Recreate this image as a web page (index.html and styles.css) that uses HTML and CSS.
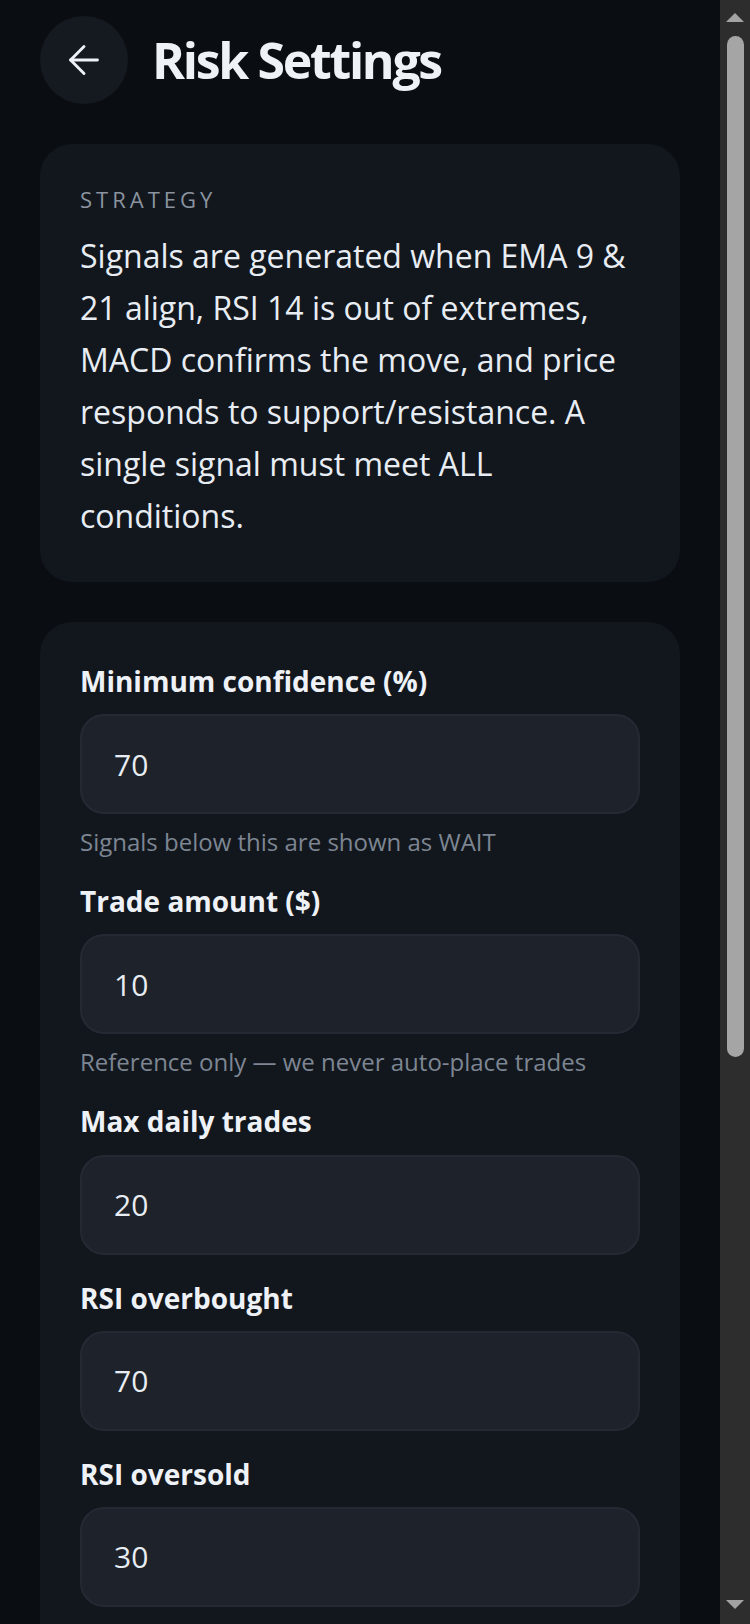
FILE: index.html
```html
<!DOCTYPE html>
<html lang="en">

<head>
    <meta charset="UTF-8">
    <meta name="viewport" content="width=device-width, initial-scale=1.0">
    <title>Risk Settings</title>
    <link rel="stylesheet" href="styles.css">
</head>

<body>
    <div class="page">
        <header class="top-bar">
            <button class="back-btn" type="button" aria-label="Back">
                <svg width="46" height="46" viewBox="0 0 24 24" fill="none" stroke="currentColor"
                    stroke-width="1.5" stroke-linecap="round" stroke-linejoin="round">
                    <path d="M12 19l-7-7 7-7" />
                    <path d="M19 12H5" />
                </svg>
            </button>
            <h1>Risk Settings</h1>
        </header>

        <section class="card strategy">
            <div class="card-label">Strategy</div>
            <p>Signals are generated when EMA 9 &amp; 21 align, RSI 14 is out of extremes, MACD confirms the move, and
                price responds to support/resistance. A single signal must meet ALL conditions.</p>
        </section>

        <form class="card settings" id="riskForm">
            <div class="field">
                <label for="minConfidence">Minimum confidence (%)</label>
                <input type="number" id="minConfidence" value="70">
                <div class="hint">Signals below this are shown as WAIT</div>
            </div>
            <div class="field">
                <label for="tradeAmount">Trade amount ($)</label>
                <input type="number" id="tradeAmount" value="10">
                <div class="hint">Reference only — we never auto-place trades</div>
            </div>
            <div class="field">
                <label for="maxTrades">Max daily trades</label>
                <input type="number" id="maxTrades" value="20">
            </div>
            <div class="field">
                <label for="rsiHigh">RSI overbought</label>
                <input type="number" id="rsiHigh" value="70">
            </div>
            <div class="field">
                <label for="rsiLow">RSI oversold</label>
                <input type="number" id="rsiLow" value="30">
            </div>
            <div class="field">
                <label for="cooldown">Cooldown after loss (min)</label>
                <input type="number" id="cooldown" value="15">
                <div class="hint">Pause new signals after a losing trade</div>
            </div>
            <div class="field">
                <label for="lossStreak">Stop after consecutive losses</label>
                <input type="number" id="lossStreak" value="3">
            </div>
            <div class="field">
                <label for="minPayout">Minimum payout (%)</label>
                <input type="number" id="minPayout" value="80">
                <div class="hint">Skip assets paying less than this</div>
            </div>
            <button type="submit" class="save-btn">Save settings</button>
        </form>
    </div>

    <!-- scrollbar of the phone frame -->
    <div class="scrollbar" aria-hidden="true">
        <span class="sb-arrow up"></span>
        <span class="sb-thumb"></span>
        <span class="sb-arrow down"></span>
    </div>
</body>

</html>
```

FILE: styles.css
```css
body {
    margin: 0;
    background: #0a0d12;
    color: #e8edf3;
    font-family: 'Open Sans', 'Noto Sans', sans-serif;
}

.page {
    max-width: 720px;
    padding: 16px 40px 20px;
    box-sizing: border-box;
}

.top-bar {
    display: flex;
    align-items: center;
    gap: 24px;
    margin-bottom: 40px;
}

.back-btn {
    width: 88px;
    height: 88px;
    border: none;
    border-radius: 50%;
    background: #151a21;
    color: #eef2f7;
    display: flex;
    align-items: center;
    justify-content: center;
    padding: 0;
    cursor: pointer;
}

h1 {
    margin: 0;
    font-size: 50px;
    font-weight: 700;
    letter-spacing: -2.3px;
    color: #eef2f7;
}

.card {
    background: #12171e;
    border-radius: 32px;
    padding: 40px;
    margin-bottom: 40px;
}

.card-label {
    font-size: 22px;
    letter-spacing: 4px;
    text-transform: uppercase;
    color: #8a939e;
}

.strategy p {
    margin: 16px 0 0;
    font-size: 32px;
    line-height: 1.625;
    color: #e8edf3;
}

.settings {
    display: flex;
    flex-direction: column;
    gap: 24px;
}

.field label {
    display: block;
    margin-bottom: 13px;
    font-size: 28px;
    font-weight: 700;
    line-height: 1.4;
    color: #eef2f7;
}

.field input {
    width: 100%;
    height: 100px;
    padding: 0 32px;
    box-sizing: border-box;
    background: #1e232b;
    border: 2px solid #242a33;
    border-radius: 24px;
    color: #e8edf3;
    font-family: inherit;
    font-size: 30px;
    outline: none;
    -moz-appearance: textfield;
}

.field input::-webkit-outer-spin-button,
.field input::-webkit-inner-spin-button {
    -webkit-appearance: none;
    margin: 0;
}

.hint {
    margin-top: 11px;
    font-size: 24px;
    color: #7d8692;
}

.save-btn {
    margin-top: 16px;
    height: 100px;
    border: none;
    border-radius: 24px;
    background: #2f81f7;
    color: #ffffff;
    font-family: inherit;
    font-size: 28px;
    font-weight: 700;
    cursor: pointer;
}

.scrollbar {
    position: fixed;
    top: 0;
    right: 0;
    width: 30px;
    height: 100vh;
    background: #2d2d2d;
    display: flex;
    flex-direction: column;
    align-items: center;
}

.sb-arrow {
    width: 0;
    height: 0;
    border-left: 9px solid transparent;
    border-right: 9px solid transparent;
}

.sb-arrow.up {
    margin-top: 13px;
    border-bottom: 9px solid #a3a3a3;
}

.sb-arrow.down {
    margin-top: auto;
    margin-bottom: 15px;
    border-top: 9px solid #a3a3a3;
}

.sb-thumb {
    margin-top: 14px;
    width: 17px;
    height: 1021px;
    border-radius: 9px;
    background: #a5a5a5;
}
```
